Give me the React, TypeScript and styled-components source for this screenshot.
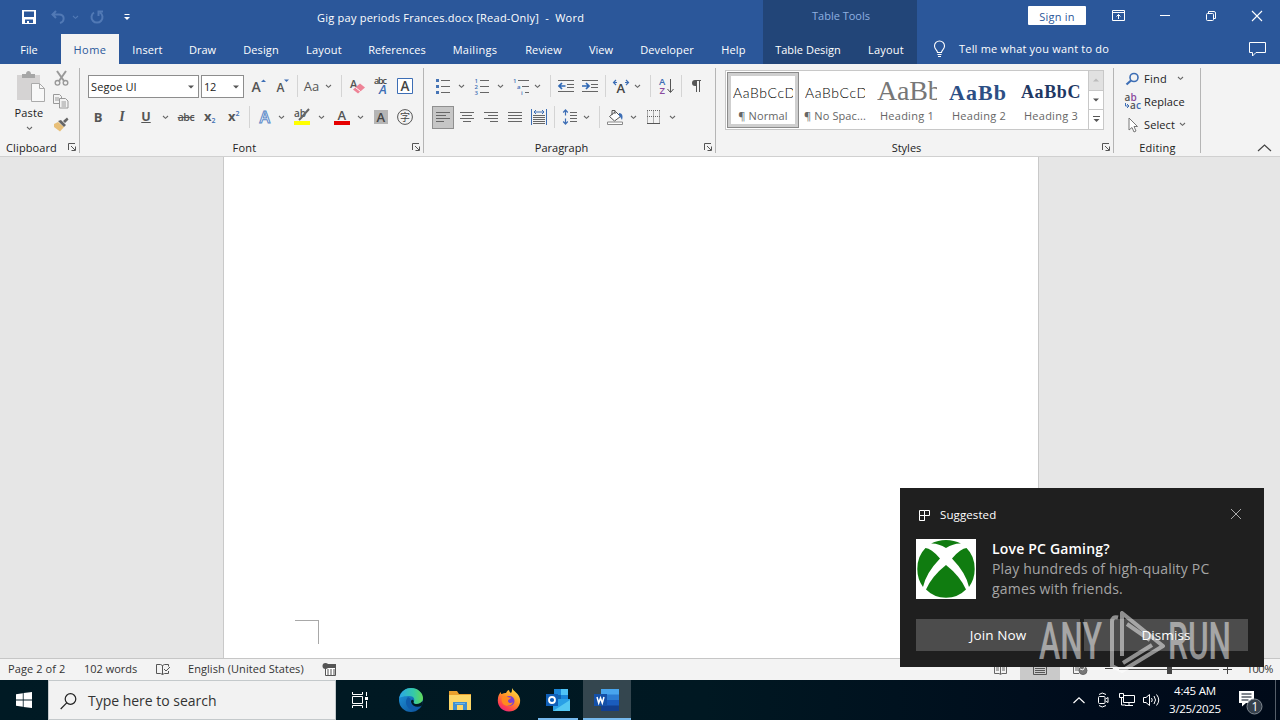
import React from 'react';
import styled, { createGlobalStyle } from 'styled-components';

const Global = createGlobalStyle`
  * { box-sizing: border-box; }
  body { margin: 0; overflow: hidden; font-family: "Open Sans", "Noto Sans", sans-serif; font-size: 11px; color: #262626; }
  svg { display: block; flex: none; overflow: visible; }
`;

const Screen = styled.div`
  position: relative; width: 1280px; height: 720px; display: flex; flex-direction: column; overflow: hidden; background: #e6e6e6;
`;
const Label = styled.span<{ $ls?: number; $size?: number; $color?: string; $gap?: number }>`
  white-space: pre; line-height: 16px; letter-spacing: ${p => p.$ls ?? 0}px; margin-left: ${p => p.$gap ?? 0}px;
  font-size: ${p => p.$size ?? 11}px; color: ${p => p.$color ?? 'inherit'};
`;
const Cell = styled.div<{ $w?: number; $gap?: number }>`
  width: ${p => p.$w ?? 24}px; margin-left: ${p => p.$gap ?? 0}px; height: 24px; flex: none;
  display: flex; align-items: center; justify-content: center;
`;

/* Title bar and tabs */
const Header = styled.header`height: 64px; flex: none; display: flex; background: #2b579a; color: #fff;`;
const HeaderMain = styled.div`width: 763px; display: flex; flex-direction: column;`;
const TitleRow = styled.div`height: 34px; display: flex; align-items: center; padding-left: 17px;`;
const TitleText = styled.div`margin-left: 178px; padding-top: 2px;`;
const TabRow = styled.nav`height: 30px; display: flex;`;
const Tab = styled.div<{ $w: number; $gap?: number; $active?: boolean }>`
  width: ${p => p.$w}px; margin-left: ${p => p.$gap ?? 0}px; height: 30px; flex: none; display: flex; align-items: center; justify-content: center; padding-top: 2px;
  background: ${p => (p.$active ? '#f3f3f3' : 'transparent')}; color: ${p => (p.$active ? '#2b579a' : '#fff')};
`;
const TableTools = styled.div`width: 154px; background: #224578; display: flex; flex-direction: column;`;
const ToolsTitle = styled.div`height: 32px; display: flex; align-items: center; justify-content: center; color: #8fb0e0; padding-left: 2px; margin-bottom: 2px;`;
const HeaderEnd = styled.div`flex: 1; display: flex; flex-direction: column;`;
const WindowRow = styled.div`height: 34px; display: flex; align-items: center; padding-left: 111px; padding-bottom: 3px;`;
const SignIn = styled.button`
  width: 58px; height: 19px; border: 0; border-radius: 1px; background: #fff; padding: 2px 0 0; display: flex; align-items: center; justify-content: center; color: #2b579a; font-family: inherit;
`;
const TellRow = styled.div`height: 30px; display: flex; align-items: center; padding-left: 14px; gap: 11px;`;
const CommentSlot = styled.div`margin-left: auto; padding-right: 14px;`;

/* Ribbon */
const Ribbon = styled.section`height: 93px; flex: none; display: flex; background: #f3f3f3; border-bottom: 1px solid #d0d0d0; padding-top: 4px;`;
const Group = styled.div<{ $w: number }>`
  width: ${p => p.$w}px; height: 85px; flex: none; border-right: 1px solid #b5b5b5; display: flex; flex-direction: column;
`;
const GroupBody = styled.div`height: 70px; flex: none;`;
const GroupFoot = styled.div<{ $pull?: number }>`
  height: 15px; display: flex; align-items: center; color: #222; padding: 0 2px 0 12px;
  & > span { flex: 1; text-align: center; margin-left: -${p => p.$pull ?? 0}px; padding-top: 5px; line-height: 12px; }
  & > svg { margin-top: 4px; }
`;
const ToolRow = styled.div<{ $pad: number; $top: number }>`
  display: flex; align-items: center; height: 24px; padding-left: ${p => p.$pad}px; margin-top: ${p => p.$top}px; color: #555;
`;
const Divider = styled.i<{ $l: number; $r: number }>`width: 1px; height: 22px; flex: none; margin: 0 ${p => p.$r}px 0 ${p => p.$l}px; background: #d4d4d4;`;
const Combo = styled.div<{ $w: number; $gap: number }>`
  width: ${p => p.$w}px; height: 23px; margin-left: ${p => p.$gap}px; flex: none; border: 1px solid #8d8d8d; background: #fff; color: #222;
  display: flex; align-items: center; justify-content: space-between; padding: 1px 4px 0 2px;
`;
const Pressed = styled.div`width: 22px; height: 23px; background: #c6c6c6; border: 1px solid #8f8f8f; display: flex; align-items: center; justify-content: center;`;
const Glyph = styled.span<{ $size: number; $weight?: number; $color?: string; $style?: string; $deco?: string; $ls?: number; $serif?: boolean }>`
  font-size: ${p => p.$size}px; font-weight: ${p => p.$weight ?? 400}; color: ${p => p.$color ?? '#555'}; font-style: ${p => p.$style ?? 'normal'};
  text-decoration: ${p => p.$deco ?? 'none'}; letter-spacing: ${p => p.$ls ?? 0}px; line-height: 1; font-family: ${p => (p.$serif ? '"Liberation Serif", serif' : 'inherit')};
`;
const ClipBody = styled.div`display: flex; height: 70px; padding: 3px 0 0 14px;`;
const PasteCol = styled.div`width: 30px; display: flex; flex-direction: column; align-items: center; color: #222; & > span { margin-top: 2px; } & > svg:last-child { margin-top: 5px; }`;
const ClipCol = styled.div`width: 24px; margin-left: 5px; display: flex; flex-direction: column; align-items: center; gap: 8px;`;

const Gallery = styled.div`display: flex; height: 60px; width: 379px; margin: 2px 0 0 9px; border: 1px solid #c8c8c8; background: #fff;`;
const StyleItem = styled.div<{ $active?: boolean }>`
  width: 72px; height: 56px; margin: 1px 0 0 ${p => (p.$active ? 1 : 0)}px; display: flex; flex-direction: column; align-items: center; flex: none; color: #666;
  outline: ${p => (p.$active ? '1px solid #8b8b8b' : 'none')}; outline-offset: -1px; border: 4px solid ${p => (p.$active ? '#cfcfcf' : 'transparent')};
  & > span { margin-top: 3px; }
`;
const Sample = styled.div<{ $size: number; $font: string; $color: string; $weight?: number; $ls?: number; $up?: number }>`
  width: 60px; height: 31px; overflow: hidden; white-space: nowrap; font: ${p => p.$weight ?? 400} ${p => p.$size}px/33px ${p => p.$font};
  color: ${p => p.$color}; letter-spacing: ${p => p.$ls ?? 0}px; margin-top: ${p => -(p.$up ?? 0)}px; margin-bottom: ${p => p.$up ?? 0}px;
`;
const Scrollers = styled.div`width: 15px; margin-left: auto; display: flex; flex-direction: column; border-left: 1px solid #c8c8c8;`;
const ScrollBtn = styled.div<{ $off?: boolean }>`flex: 1; display: flex; align-items: center; justify-content: center; background: ${p => (p.$off ? '#e1e1e1' : '#fff')}; & + & { border-top: 1px solid #c8c8c8; }`;
const EditRow = styled.div<{ $chev?: number }>`
  height: 23px; display: flex; align-items: center; padding-left: 10px; gap: 3px; color: #222; margin-top: -1px; margin-bottom: 1px;
  & > span + svg { margin-left: ${p => p.$chev ?? 0}px; }
`;
const CollapseSlot = styled.div`margin-left: auto; align-self: flex-end; padding: 0 8px 4px 0;`;

/* Document */
const Workspace = styled.main`flex: 1; display: flex; justify-content: center; padding-right: 18px;`;
const Paper = styled.div`width: 816px; background: #fff; border: solid #c9c9c9; border-width: 0 1px; display: flex; align-items: flex-end; padding: 0 0 14px 71px;`;
const CropMark = styled.div`width: 24px; height: 24px; border: solid #a8a8a8; border-width: 1px 1px 0 0;`;

/* Status bar */
const StatusBar = styled.footer`height: 22px; flex: none; display: flex; align-items: center; background: #f3f3f3; border-top: 1px solid #c6c6c6; padding: 0 7px 1px 8px; color: #333;`;
const StatusItem = styled.div<{ $w: number }>`width: ${p => p.$w}px; flex: none; display: flex; align-items: center;`;
const ViewButton = styled.div<{ $on?: boolean }>`width: 40px; height: 21px; display: flex; align-items: center; justify-content: center; background: ${p => (p.$on ? '#c9c9c9' : 'transparent')};`;
const Views = styled.div`margin-left: auto; display: flex; align-items: center;`;
const ZoomOut = styled.div`margin-left: 5px;`;
const Track = styled.div`width: 100px; height: 10px; margin: 0 4px; display: flex; align-items: center; justify-content: center; background: linear-gradient(#555, #555) center / 100% 1px no-repeat;`;
const Thumb = styled.i`width: 5px; height: 10px; background: #444;`;

/* Taskbar */
const Taskbar = styled.footer`height: 40px; flex: none; display: flex; background: linear-gradient(90deg, #001a24, #001822 55%, #000c1c 85%, #000a19); color: #fff;`;
const TaskButton = styled.div<{ $w?: number; $on?: boolean; $line?: boolean; $gap?: number }>`
  width: ${p => p.$w ?? 48}px; margin-left: ${p => p.$gap ?? 0}px; height: 40px; flex: none; display: flex; align-items: center; justify-content: center;
  background: ${p => (p.$on ? '#34464f' : 'transparent')}; box-shadow: ${p => (p.$line ? 'inset 0 -2px #76b9ed' : 'none')};
`;
const SearchBox = styled.div`width: 288px; height: 40px; background: #f2f2f2; border: 1px solid #c4c9cb; display: flex; align-items: center; padding: 2px 0 0 11px; gap: 11px; color: #333;`;
const Tray = styled.div`margin-left: auto; display: flex; align-items: center;`;
const Clock = styled.div`width: 62px; margin-left: 1px; display: flex; flex-direction: column; align-items: center; & > span { line-height: 18px; }`;
const ShowDesktop = styled.i`width: 1px; height: 40px; background: #555e69; margin-left: 9px; margin-right: 4px;`;

/* Notification */
const Toast = styled.aside`position: absolute; left: 900px; top: 488px; width: 364px; height: 179px; background: #1f1f1f; color: #fff; padding: 16px; display: flex; flex-direction: column;`;
const ToastHead = styled.div`height: 21px; display: flex; align-items: center; gap: 9px; padding: 0 7px 0 3px; & > svg:last-child { margin-left: auto; margin-bottom: 2px; }`;
const ToastBody = styled.div`display: flex; margin-top: 14px; gap: 16px;`;
const ToastText = styled.div`display: flex; flex-direction: column; color: #a5a5a5; font-size: 14px; line-height: 20px; white-space: nowrap; letter-spacing: 0.18px;`;
const ToastTitle = styled.strong`font-weight: 600; color: #fff; letter-spacing: 0.18px;`;
const ToastActions = styled.div`display: grid; grid-template-columns: 1fr 1fr; gap: 4px; margin-top: 20px;`;
const ToastButton = styled.div`height: 32px; background: #4c4c4c; display: flex; align-items: center; justify-content: center; font-size: 13.5px; letter-spacing: 0.1px;`;
const Watermark = styled.svg`position: absolute; left: 1036px; top: 608px;`;

const Chevron = ({ c = '#666' }: { c?: string }) => (
  <svg width="7" height="5" viewBox="0 0 7 5"><path d="M1 1l2.500 2.300L6 1" fill="none" stroke={c} strokeWidth="1.100" /></svg>
);
const Caret = ({ c = '#555' }: { c?: string }) => <svg width="6" height="4" viewBox="0 0 6 4"><path d="M0 .5h6L3 3.500z" fill={c} /></svg>;
const Launcher = () => (
  <svg width="9" height="9" viewBox="0 0 9 9"><path d="M.5 7V.5H7M3 3l4 4M7.500 3.500v4H3.500" fill="none" stroke="#555" /></svg>
);
const Lines = ({ rows }: { rows: [number, number][] }) => (
  <svg width="16" height="14" viewBox="0 0 16 14"><path d={rows.map(([a, b], i) => `M${a} ${2.5 + i * 3}H${b}`).join('')} stroke="#666" /></svg>
);
const A = ({ x, y, s, c }: { x: number; y: number; s: number; c: string }) => (
  <text x={x} y={y} fontSize={s} fill={c} fontWeight={600}>A</text>
);

const tabs: [string, number, number][] = [
  ['Insert', 57, 0.1], ['Draw', 53, 0], ['Design', 64, 0.1], ['Layout', 62, 0.2], ['References', 84, 0.05], ['Mailings', 72, 0.3],
  ['Review', 65, 0.1], ['View', 50, 0], ['Developer', 82, 0.1], ['Help', 51, 0.2],
];

const ClipboardGroup = () => (
  <Group $w={80}>
    <ClipBody>
      <PasteCol>
        <svg width="30" height="32" viewBox="0 0 30 32">
          <path d="M3 4h23v25H3z" fill="#d5d3d3" /><path d="M8 3h4c0-4 5-4 5 0h4v4H8z" fill="#a6a6a6" />
          <path d="M17.500 12.500h8l5 5v13h-13z" fill="#f8f8f8" stroke="#aaa" /><path d="M25.500 12.500v5h5" fill="none" stroke="#aaa" />
        </svg>
        <Label $ls={0.15}>Paste</Label>
        <Chevron />
      </PasteCol>
      <ClipCol>
        <svg width="15" height="15" viewBox="0 0 15 15" fill="none" stroke="#999" strokeWidth="1.400"><path d="M3 0l7 10M12 0L5 10" strokeWidth="2" /><circle cx="3.500" cy="11.800" r="2.300" /><circle cx="11.500" cy="11.800" r="2.300" /></svg>
        <svg width="16" height="15" viewBox="0 0 16 15" fill="#f3f3f3" stroke="#999"><path d="M.5.500h6l2 2v7h-8zM2 4h4M2 6h4" /><path d="M6.500 4.500h6l2.500 2.500v7H6.500zM8.500 8h4.500M8.500 10h4.500M8.500 12h4.500" /></svg>
        <svg width="16" height="15" viewBox="0 0 16 15"><path d="M1 7l4-2 6 5-4 4.500L1 10z" fill="#e8bf78" /><path d="M5 4l3-1 5 5-2 2zM10 4l4-3.500 1.500 2L12 6z" fill="#666" /></svg>
      </ClipCol>
    </ClipBody>
    <GroupFoot $pull={17}><Label $ls={0.1}>Clipboard</Label><Launcher /></GroupFoot>
  </Group>
);

const FontGroup = () => (
  <Group $w={344}>
    <GroupBody>
      <ToolRow $pad={8} $top={6}>
        <Combo $w={111} $gap={0}><Label $ls={0.1}>Segoe UI</Label><Caret /></Combo>
        <Combo $w={43} $gap={2}><Label $ls={-0.2}>12</Label><Caret /></Combo>
        <Cell $gap={2}><svg width="16" height="16" viewBox="0 0 16 16"><A x={1.5} y={14} s={14} c="#555" /><path d="M11 4h5L13.500 1.500z" fill="#3d6eb5" /></svg></Cell>
        <Cell><svg width="16" height="16" viewBox="0 0 16 16"><A x={2.5} y={14} s={12} c="#555" /><path d="M10 1.500h5L12.500 4z" fill="#3d6eb5" /></svg></Cell>
        <Divider $l={3} $r={2} />
        <Cell $w={23}><Glyph $size={13} $weight={500}>Aa</Glyph></Cell>
        <Cell $w={10}><Chevron /></Cell>
        <Divider $l={8} $r={3} />
        <Cell><svg width="16" height="16" viewBox="0 0 16 16"><A x={1} y={10} s={11} c="#555" /><path d="M4 11.500l7-6 5 4-7 6z" fill="#ee8396" /><path d="M6.500 9.500l5 4" stroke="#fff" /></svg></Cell>
        <Cell><svg width="16" height="18" viewBox="0 0 16 18"><text x="1" y="7" fontSize="9" fill="#444" fontWeight="600" textLength="13">abc</text><g fontStyle="italic"><A x={6} y={17} s={13} c="#3d6eb5" /></g></svg></Cell>
        <Cell><svg width="16" height="16" viewBox="0 0 16 16"><path d="M.5.500h15v15H.5z" fill="#fff" stroke="#3d6eb5" /><A x={3.5} y={13} s={13.5} c="#444" /></svg></Cell>
      </ToolRow>
      <ToolRow $pad={6} $top={7}>
        <Cell><Glyph $size={13} $weight={700}>B</Glyph></Cell>
        <Cell><Glyph $size={14} $weight={700} $style="italic" $serif>I</Glyph></Cell>
        <Cell><Glyph $size={12.5} $weight={700} $deco="underline">U</Glyph></Cell>
        <Cell $w={14}><Chevron /></Cell>
        <Cell $gap={2}><Glyph $size={10.5} $weight={600} $deco="line-through" $ls={-0.4}>abc</Glyph></Cell>
        <Cell><svg width="14" height="16" viewBox="0 0 14 16"><text x="1" y="12" fontSize="13" fontWeight="700" fill="#555">x</text><text x="8.500" y="14" fontSize="7" fontWeight="600" fill="#3d6eb5">2</text></svg></Cell>
        <Cell><svg width="14" height="16" viewBox="0 0 14 16"><text x="1" y="12" fontSize="13" fontWeight="700" fill="#555">x</text><text x="8.500" y="6.500" fontSize="7" fontWeight="600" fill="#3d6eb5">2</text></svg></Cell>
        <Divider $l={3} $r={3} />
        <Cell><svg width="16" height="16" viewBox="0 0 16 16"><text x="2.500" y="14" fontSize="16" fontWeight="600" fill="#fff" stroke="#5a88c8" strokeWidth="1">A</text></svg></Cell>
        <Cell $w={8}><Chevron /></Cell>
        <Cell $gap={5}><svg width="18" height="16" viewBox="0 0 18 16"><text x="1" y="8" fontSize="10" fontWeight="600" fill="#555">ab</text><path d="M16 0l-8 9-2 2" stroke="#666" strokeWidth="2" fill="none" /><path d="M1 12h16v4H1z" fill="#ffff00" /></svg></Cell>
        <Cell $w={12} $gap={1}><Chevron /></Cell>
        <Cell $gap={3}><svg width="16" height="16" viewBox="0 0 16 16"><A x={3.5} y={11} s={13} c="#555" /><path d="M0 12h16v4H0z" fill="#e60000" /></svg></Cell>
        <Cell $w={12}><Chevron /></Cell>
        <Cell $gap={3}><svg width="14" height="14" viewBox="0 0 14 14"><path d="M0 0h14v14H0z" fill="#b5b5b5" /><A x={2.5} y={12} s={13} c="#444" /></svg></Cell>
        <Cell><svg width="16" height="16" viewBox="0 0 16 16"><circle cx="8" cy="8" r="7.400" fill="none" stroke="#555" /><text x="3" y="11.600" fontSize="10" fill="#444" fontFamily="Noto Sans CJK SC, sans-serif">字</text></svg></Cell>
      </ToolRow>
    </GroupBody>
    <GroupFoot $pull={15}><Label $ls={0.2}>Font</Label><Launcher /></GroupFoot>
  </Group>
);

const ParagraphGroup = () => (
  <Group $w={292}>
    <GroupBody>
      <ToolRow $pad={7} $top={6}>
        <Cell $w={23}><svg width="14" height="15" viewBox="0 0 14 15"><path d="M0 0h3v3H0zM0 6h3v3H0zM0 12h3v3H0z" fill="#4674b5" /><path d="M5 1.500h9M5 7.500h9M5 13.500h9" stroke="#666" /></svg></Cell>
        <Cell $w={12} $gap={1}><Chevron /></Cell>
        <Cell $gap={3}><svg width="16" height="16" viewBox="0 0 16 16" fontSize="6" fontWeight="600" fill="#3d6eb5"><text x="0.500" y="4.500">1</text><text x="0.500" y="10.500">2</text><text x="0.500" y="16.500">3</text><path d="M6 2.500h9M6 8.500h9M6 14.500h9" stroke="#666" /></svg></Cell>
        <Cell $w={12}><Chevron /></Cell>
        <Cell $gap={3}><svg width="18" height="16" viewBox="0 0 18 16" fontSize="6" fontWeight="600" fill="#3d6eb5"><text x="1" y="4.500">1</text><text x="5" y="10.500">a</text><text x="9" y="16.500">i</text><path d="M6 2.500h11M10 8.500h7M13 14.500h4" stroke="#666" /></svg></Cell>
        <Cell $w={8}><Chevron /></Cell>
        <Divider $l={9} $r={3} />
        <Cell><svg width="16" height="12" viewBox="0 0 16 12"><path d="M0 .5h16M9 4.500h7M9 7.500h7M0 11.500h16" stroke="#666" /><path d="M7.500 6H1.500M4 3L1 6l3 3" fill="none" stroke="#2f68b5" strokeWidth="1.700" /></svg></Cell>
        <Cell><svg width="16" height="12" viewBox="0 0 16 12"><path d="M0 .5h16M9 4.500h7M9 7.500h7M0 11.500h16" stroke="#666" /><path d="M0 6h6M4 3l3 3-3 3" fill="none" stroke="#2f68b5" strokeWidth="1.700" /></svg></Cell>
        <Divider $l={3} $r={3} />
        <Cell><svg width="16" height="14" viewBox="0 0 16 14"><A x={3.5} y={14} s={13} c="#444" /><path d="M0 3.500h4M3 1L.5 3.500 3 6M12 3.500h4M13 1l2.500 2.500L13 6" fill="none" stroke="#3d6eb5" strokeWidth="1.200" /></svg></Cell>
        <Cell $w={8}><Chevron /></Cell>
        <Divider $l={9} $r={3} />
        <Cell><svg width="15" height="16" viewBox="0 0 15 16" fontSize="9.500" fontWeight="600"><text x="0" y="7" fill="#3d6eb5">A</text><text x="0.500" y="16" fill="#8a4a9e">Z</text><path d="M11.500 1v13M8.500 11l3 3.500 3-3.500" stroke="#555" fill="none" /></svg></Cell>
        <Divider $l={3} $r={2} />
        <Cell><svg width="10" height="12" viewBox="0 0 10 12"><path d="M10 .5H4M5.500 0v12M8.500 0v12" stroke="#555" fill="none" /><path d="M5.500 0H4a3 3 0 000 6h1.500z" fill="#555" /></svg></Cell>
      </ToolRow>
      <ToolRow $pad={8} $top={7}>
        <Pressed><Lines rows={[[1, 15], [1, 11], [1, 15], [1, 9]]} /></Pressed>
        <Cell $gap={1}><Lines rows={[[1, 15], [3, 13], [1, 15], [4, 12]]} /></Cell>
        <Cell><Lines rows={[[1, 15], [5, 15], [1, 15], [7, 15]]} /></Cell>
        <Cell><Lines rows={[[1, 15], [1, 15], [1, 15], [1, 15]]} /></Cell>
        <Cell><svg width="16" height="16" viewBox="0 0 16 16"><path d="M.5 0v16M15.500 0v16M3 3h10M5 1L3 3l2 2M11 1l2 2-2 2" stroke="#3d6eb5" fill="none" /><path d="M2 6.500h12M2 8.500h12M2 10.500h12M2 12.500h12M2 14.500h12" stroke="#666" /></svg></Cell>
        <Divider $l={3} $r={3} />
        <Cell><svg width="14" height="16" viewBox="0 0 14 16"><path d="M2.500 1v5.500M2.500 9.500V15M.2 3.500L2.500 1l2.300 2.500M.2 12.500L2.500 15l2.300-2.500" fill="none" stroke="#3d6eb5" strokeWidth="1.200" /><path d="M7 3.500h7M7 6.500h7M7 9.500h7M7 12.500h7" stroke="#666" /></svg></Cell>
        <Cell $w={8}><Chevron /></Cell>
        <Divider $l={9} $r={3} />
        <Cell><svg width="17" height="16" viewBox="0 0 17 16"><path d="M2.500 7.500l6-5 5 5-6 4.500z" fill="#fff" stroke="#555" /><path d="M5 6V1.500h3V5" fill="none" stroke="#555" /><path d="M12 4c4 0 4 4 3 7-1-1-1-3-3-4z" fill="#3d6eb5" /><path d="M.5 13h15v2.500H.5z" fill="#fff" stroke="#888" /></svg></Cell>
        <Cell $w={12}><Chevron /></Cell>
        <Cell $gap={2}><svg width="13" height="14" viewBox="0 0 13 14"><path d="M.5.500v13M6.500.500v13M12.500.500v13M0 .5h13M0 6.500h13" stroke="#666" strokeDasharray="1 1" /><path d="M0 13.500h13" stroke="#555" /></svg></Cell>
        <Cell $w={12} $gap={1}><Chevron /></Cell>
      </ToolRow>
    </GroupBody>
    <GroupFoot $pull={17}><Label>Paragraph</Label><Launcher /></GroupFoot>
  </Group>
);

const StylesGroup = () => (
  <Group $w={398}>
    <GroupBody>
      <Gallery>
        <StyleItem $active><Sample $size={14} $font="Lato, sans-serif" $color="#000" $ls={0.6} $weight={300}>AaBbCcDd</Sample><Label $ls={0.1}>¶ Normal</Label></StyleItem>
        <StyleItem><Sample $size={14} $font="Lato, sans-serif" $color="#000" $ls={0.6} $weight={300}>AaBbCcDd</Sample><Label $ls={0.1}>¶ No Spac...</Label></StyleItem>
        <StyleItem><Sample $size={28} $font="Liberation Serif, serif" $color="#777" $ls={-0.2} $up={2}>AaBbC</Sample><Label $ls={0.25}>Heading 1</Label></StyleItem>
        <StyleItem><Sample $size={22} $font="Liberation Serif, serif" $color="#2c4f85" $weight={700} $ls={1.1}>AaBb</Sample><Label $ls={0.25}>Heading 2</Label></StyleItem>
        <StyleItem><Sample $size={18} $font="Liberation Serif, serif" $color="#1f3864" $weight={700} $ls={0.6}>AaBbC</Sample><Label $ls={0.25}>Heading 3</Label></StyleItem>
        <Scrollers>
          <ScrollBtn $off><svg width="6" height="4"><path d="M0 3.500h6L3 .5z" fill="#bbb" /></svg></ScrollBtn>
          <ScrollBtn><Caret /></ScrollBtn>
          <ScrollBtn><svg width="7" height="7"><path d="M0 .5h7" stroke="#555" /><path d="M.5 3h6L3.500 6z" fill="#555" /></svg></ScrollBtn>
        </Scrollers>
      </Gallery>
    </GroupBody>
    <GroupFoot $pull={17}><Label>Styles</Label><Launcher /></GroupFoot>
  </Group>
);

const EditingGroup = () => (
  <Group $w={87}>
    <GroupBody>
      <EditRow $chev={7}><svg width="17" height="14" viewBox="0 0 17 14" fill="none" stroke="#3d6eb5"><circle cx="10" cy="5.500" r="4" strokeWidth="1.600" /><path d="M7 8.500l-4.500 4" strokeWidth="2.200" /></svg><Label $ls={0.3}>Find</Label><Chevron /></EditRow>
      <EditRow><svg width="17" height="16" viewBox="0 0 17 16" fontSize="10" fontWeight="600"><text x="0.500" y="7" fill="#555">a</text><text x="6.500" y="7" fill="#8a4a9e">b</text><text x="6" y="15" fill="#555">a</text><text x="12" y="15" fill="#3d6eb5">c</text><path d="M1.500 9v3h3M3 10l2 2-2 2" fill="none" stroke="#3d6eb5" /></svg><Label $ls={0.1}>Replace</Label></EditRow>
      <EditRow $chev={1}><svg width="17" height="16" viewBox="0 0 17 16"><path d="M5 1v12l3-2.500 2 4.500 2-1-2-4.500h3.500z" fill="#fff" stroke="#777" /></svg><Label $ls={0.1}>Select</Label><Chevron /></EditRow>
    </GroupBody>
    <GroupFoot $pull={9}><Label $ls={0.2}>Editing</Label></GroupFoot>
  </Group>
);

const Edge = () => (
  <svg width="26" height="26" viewBox="0 0 26 26">
    <defs>
      <linearGradient id="edgeTop" x1="0" x2="1"><stop offset="0" stopColor="#2aa6e8" /><stop offset=".6" stopColor="#35c9a8" /><stop offset="1" stopColor="#62d957" /></linearGradient>
      <linearGradient id="edgeLow" x1="0" x2="1" y2="1"><stop offset="0" stopColor="#1f9be0" /><stop offset="1" stopColor="#0c4a94" /></linearGradient>
    </defs>
    <circle cx="13" cy="13" r="12" fill="url(#edgeLow)" />
    <path d="M1.200 11C3 4 8 1 13 1c7 0 12 5 12 10 0 4-3 6-6.500 6-3 0-3.500-1.500-2.500-3 1-2-.5-5-4.500-5C7 9 2 10 1.200 11z" fill="url(#edgeTop)" />
    <path d="M10 10c-4 4-2 11 4 13 4 1 7-1 9.500-4-5 2-10 0-11-4-.4-2 .5-3 .5-3z" fill="#0f5cab" />
    <path d="M16 14c-1 1.500-.5 3 2.500 3 3 0 5-1.500 6-3l.3 2-1.300 3c-5 2-9.500 0-10.500-4 0-2 1-3.500 3-1z" fill="#001a24" />
  </svg>
);
const Firefox = () => (
  <svg width="24" height="24" viewBox="0 0 24 24">
    <defs><linearGradient id="fox" x1=".8" y1="0" x2=".2" y2="1"><stop offset="0" stopColor="#ffe14a" /><stop offset=".45" stopColor="#ff9425" /><stop offset=".8" stopColor="#ff3f50" /><stop offset="1" stopColor="#e3218c" /></linearGradient></defs>
    <path d="M15 0c1 3 7 5 8 11 1 7-4 12.500-11 12.500S.5 18 .8 12C1 8 2 6 4 4c0 2 0 2 1 2 1-1 3-1 4-1 1-2 2-3 3-3 0 2 2 3 2 3 1-1 1-3 1-5z" fill="url(#fox)" />
    <circle cx="12.500" cy="13" r="5" fill="#7b3fd4" /><path d="M5 9c2-1 4-1 6 0 1 1 3 0 3 1s-3 1-3 3 3 3 5 1c-1 4-7 5-10 2-1-2-2-4-1-7z" fill="#ff8a1f" />
  </svg>
);
const Folder = () => (
  <svg width="22" height="19" viewBox="0 0 22 19"><path d="M0 0h8l2 3h12v16H0z" fill="#e9a02c" /><path d="M0 4h22v15H0z" fill="#fcd667" /><path d="M4 11h14v8H4z" fill="#3f8fd0" /><path d="M8 14h6v5H8z" fill="#fcd667" /><path d="M6 12h10v1H6z" fill="#6db7e8" /></svg>
);
const Outlook = () => (
  <svg width="24" height="22" viewBox="0 0 24 22"><path d="M8 0h14v12H8z" fill="#1a86d9" /><path d="M15 0h7v6h-7z" fill="#4fc3f5" /><path d="M8 6h7v6H8z" fill="#0f63ae" /><path d="M7 10l17 0v12H7z" fill="#2aa0e6" /><path d="M7 22l17-11v11z" fill="#55c8f2" /><path d="M0 5h12v12H0z" fill="#0f5fb8" /><circle cx="6" cy="11" r="3" fill="none" stroke="#fff" strokeWidth="1.800" /></svg>
);
const WordLogo = () => (
  <svg width="26" height="22" viewBox="0 0 26 22"><path d="M7 0h18v6H7z" fill="#48a5ee" /><path d="M7 5.500h18V11H7z" fill="#2b7cd3" /><path d="M7 11h18v6H7z" fill="#1a5cbe" /><path d="M7 16.500h18V22H7z" fill="#123f8f" /><path d="M0 5h13v12H0z" fill="#1450a8" /><path d="M3 8l1.700 6L6.500 9l1.800 5L10 8" fill="none" stroke="#fff" strokeWidth="1.500" /></svg>
);
const XboxLogo = () => (
  <svg width="60" height="60" viewBox="0 0 60 60">
    <path d="M0 0h60v60H0z" fill="#fff" />
    <g fill="#107c10">
      <path d="M15 4.500Q22 1 30 1T45 4.500Q38 4 30 9 22 4 15 4.500z" />
      <path d="M9.500 9Q15 9 24 19.500 10 34 7 48 1.300 40 1.300 30 1.300 17 9.500 9z" />
      <path d="M50.500 9Q45 9 36 19.500 50 34 53 48 58.700 40 58.700 30 58.700 17 50.500 9z" />
      <path d="M30 26Q44 37 50 50.500 42 58.700 30 58.700T10 50.500Q16 37 30 26z" />
    </g>
  </svg>
);

export default function App() {
  return (
    <Screen>
      <Global />
      <Header>
        <HeaderMain>
          <TitleRow>
            <Cell><svg width="14" height="14" viewBox="0 0 14 14"><path d="M0 0h14v14H0z" fill="#fff" /><path d="M2 1.500h10v5.500H2zM3 9.500h8V13H3z" fill="#2b579a" /><path d="M5 11h2v2H5z" fill="#fff" /></svg></Cell>
            <Cell $gap={5}><svg width="14" height="14" viewBox="0 0 14 14" fill="none" stroke="#5179b5" strokeWidth="2"><path d="M5 1L1.500 4.500 5 8M2 4.500h6c6 0 6 7 1 8.500" /></svg></Cell>
            <Cell $w={10}><Chevron c="#5179b5" /></Cell>
            <Cell $gap={5}><svg width="14" height="14" viewBox="0 0 14 14" fill="none" stroke="#5179b5" strokeWidth="2"><path d="M4 2.500a5.500 5.500 0 106 0M8.500 6V1.500H13" /></svg></Cell>
            <Cell $gap={6}><svg width="7" height="8" viewBox="0 0 7 8"><path d="M.5 1.500h5" stroke="#fff" /><path d="M0 4h6L3 7z" fill="#fff" /></svg></Cell>
            <TitleText><Label $ls={0.24}>Gig pay periods Frances.docx [Read-Only]  -  Word</Label></TitleText>
          </TitleRow>
          <TabRow>
            <Tab $w={58}><Label>File</Label></Tab>
            <Tab $w={58} $gap={3} $active><Label $ls={0.5}>Home</Label></Tab>
            {tabs.map(([t, w, ls]) => <Tab key={t} $w={w}><Label $ls={ls}>{t}</Label></Tab>)}
          </TabRow>
        </HeaderMain>
        <TableTools>
          <ToolsTitle><Label>Table Tools</Label></ToolsTitle>
          <TabRow><Tab $w={90}><Label>Table Design</Label></Tab><Tab $w={64} $gap={1}><Label $ls={0.2}>Layout</Label></Tab></TabRow>
        </TableTools>
        <HeaderEnd>
          <WindowRow>
            <SignIn><Label $ls={0.2}>Sign in</Label></SignIn>
            <Cell $gap={20}><svg width="13" height="11" viewBox="0 0 13 11" fill="none" stroke="#fff"><path d="M.5.500h12v10H.5zM.5 2.500h12M6.500 9V4.500M4.500 6.500l2-2 2 2" /></svg></Cell>
            <Cell $gap={23}><svg width="10" height="2"><path d="M0 .5h10" stroke="#fff" /></svg></Cell>
            <Cell $gap={22}><svg width="10" height="10" viewBox="0 0 10 10" fill="none" stroke="#fff"><rect x=".5" y="2.500" width="7" height="7" rx="1" /><path d="M2.500 2V.5h5.500q1.500 0 1.500 1.500v5.500H8" /></svg></Cell>
            <Cell $gap={22}><svg width="10" height="10"><path d="M0 0l10 10M10 0L0 10" stroke="#fff" strokeWidth="1.100" /></svg></Cell>
          </WindowRow>
          <TellRow>
            <svg width="17" height="16" viewBox="0 0 17 16" fill="none" stroke="#fff" strokeWidth="1.100"><path d="M6.500 11.500C6.500 9 3.500 8.500 3.500 5a5 5 0 0110 0c0 3.500-3 4-3 6.500zM6.500 13.500h4M7 15.500h3" /></svg>
            <Label $ls={0.2}>Tell me what you want to do</Label>
            <CommentSlot><svg width="17" height="15" viewBox="0 0 17 15"><path d="M.5.500h16v10H7l-3.500 3.500v-3.500h-3z" fill="none" stroke="#fff" /></svg></CommentSlot>
          </TellRow>
        </HeaderEnd>
      </Header>

      <Ribbon>
        <ClipboardGroup /><FontGroup /><ParagraphGroup /><StylesGroup /><EditingGroup />
        <CollapseSlot><svg width="15" height="9" viewBox="0 0 15 9"><path d="M1 8l6.500-6L14 8" fill="none" stroke="#444" strokeWidth="1.200" /></svg></CollapseSlot>
      </Ribbon>

      <Workspace><Paper><CropMark /></Paper></Workspace>

      <StatusBar>
        <StatusItem $w={76}><Label $ls={0.1}>Page 2 of 2</Label></StatusItem>
        <StatusItem $w={72}><Label>102 words</Label></StatusItem>
        <StatusItem $w={32}><svg width="14" height="13" viewBox="0 0 14 13" fill="none" stroke="#555"><path d="M.5 1.500h4l2 1v9l-2-1h-4zM6.500 2.500l2-1h4v2M6.500 11.500l2-1h4V8M8 6l2 2 4-4" /></svg></StatusItem>
        <StatusItem $w={135}><Label $ls={0.06}>English (United States)</Label></StatusItem>
        <svg width="14" height="13" viewBox="0 0 14 13"><path d="M2.500 3.500h10v9h-10z" fill="#fff" stroke="#555" /><path d="M4 1h9v4H4z" fill="#555" /><path d="M4 7h8M4 9h8M4 11h8" stroke="#555" strokeDasharray="2 1" /><circle cx="2.500" cy="3" r="3" fill="#555" /></svg>
        <Views>
          <ViewButton><svg width="13" height="11" viewBox="0 0 13 11" fill="none" stroke="#666"><path d="M.5 1h4.500l1.500 1 1.500-1h4.500v8.500H8l-1.500 1-1.500-1H.5zM6.500 2v8M2 4h3M2 6h3M8 4h3M8 6h3" /></svg></ViewButton>
          <ViewButton $on><svg width="14" height="11" viewBox="0 0 14 11" fill="none" stroke="#555"><path d="M.5.500h13v10H.5zM2 2.500h10M2 4.500h10M2 6.500h10M2 8.500h10" /></svg></ViewButton>
          <ViewButton><svg width="15" height="12" viewBox="0 0 15 12" fill="none" stroke="#666"><path d="M8 .5H.5v10H6M2 3h5M2 5h4M2 7h4" /><circle cx="10" cy="7.500" r="4" fill="#777" /><path d="M7 6l3 1 2-3" stroke="#eee" /></svg></ViewButton>
          <ZoomOut><svg width="10" height="2"><path d="M0 .5h8" stroke="#444" /></svg></ZoomOut>
          <Track><Thumb /></Track>
          <svg width="9" height="9"><path d="M0 4.500h9M4.500 0v9" stroke="#444" /></svg>
          <Label $ls={-0.35} $gap={14}>100%</Label>
        </Views>
      </StatusBar>

      <Taskbar>
        <TaskButton><svg width="16" height="16" viewBox="0 0 16 16" fill="#fff"><path d="M0 2.200L6.800 1.200V7.600H0zM7.600 1.100L16 0v7.600H7.600zM0 8.400h6.800v6.400L0 13.800zM7.600 8.400H16V16l-8.400-1.100z" /></svg></TaskButton>
        <SearchBox>
          <svg width="17" height="17" viewBox="0 0 17 17" fill="none" stroke="#222" strokeWidth="1.200"><circle cx="10.500" cy="6" r="5.300" /><path d="M6.700 9.800L.7 16" /></svg>
          <Label $size={14} $ls={-0.02}>Type here to search</Label>
        </SearchBox>
        <TaskButton><svg width="17" height="16" viewBox="0 0 17 16" fill="none" stroke="#fff"><path d="M.5 0v2.500h10V0M.5 4.500h10v7H.5zM.5 16v-2.500h10V16M14.500 0v4M14.500 9v7" /><path d="M13 5h3v3h-3z" fill="#fff" stroke="none" /></svg></TaskButton>
        <TaskButton $gap={3}><Edge /></TaskButton>
        <TaskButton $gap={1}><Folder /></TaskButton>
        <TaskButton $gap={1}><Firefox /></TaskButton>
        <TaskButton $w={40} $gap={5} $line><Outlook /></TaskButton>
        <TaskButton $gap={5} $on $line><WordLogo /></TaskButton>
        <Tray>
          <Cell><svg width="12" height="7"><path d="M.5 6L6 .8 11.500 6" fill="none" stroke="#fff" strokeWidth="1.200" /></svg></Cell>
          <Cell><svg width="12" height="16" viewBox="0 0 12 16" fill="none" stroke="#fff"><rect x="1.500" y="4.500" width="6.500" height="7" rx="1" /><path d="M8.500 7l2.500-1.500v5L8.500 9M2 2.500q3-3 7 0M2 13.500q3 3 7 0" /></svg></Cell>
          <Cell><svg width="16" height="14" viewBox="0 0 16 14" fill="none" stroke="#fff"><path d="M4.500 2.500h11v7h-11zM10 9.500v3M6 12.500h8M.5.500h4v4h-4zM2.500 4.500v7.500h4" /></svg></Cell>
          <Cell><svg width="17" height="14" viewBox="0 0 17 14" fill="none" stroke="#fff"><path d="M.5 4.500h2.500L6.500 1.500v11L3 9.500H.5zM8.500 5q1.500 2 0 4M11 3q3 4 0 8M13.500 1.500q4.500 5.500 0 11" /></svg></Cell>
          <Clock><Label $size={11.5} $ls={-0.2}>4:45 AM</Label><Label $size={11.5} $ls={-0.3}>3/25/2025</Label></Clock>
          <Cell $gap={8} $w={32}><svg width="25" height="24" viewBox="0 0 25 24"><path d="M1 3h15v12H8l-4 3.500V15H1z" fill="#fff" /><path d="M3.500 6h10M3.500 9h10M3.500 12h7" stroke="#000c1c" /><circle cx="16.500" cy="18.500" r="7.500" fill="#36404c" stroke="#808891" /><text x="13.500" y="23" fontSize="12" fill="#fff">1</text></svg></Cell>
          <ShowDesktop />
        </Tray>
      </Taskbar>

      <Toast>
        <ToastHead>
          <svg width="12" height="12" viewBox="0 0 12 12" fill="none" stroke="#fff"><path d="M.5 1.500h5v5h-5zM.5 6.500h5v5h-5zM5.500 6.500h5v-5h-5M5.500 11.500v-5" /></svg>
          <Label $size={11.5} $ls={0.1}>Suggested</Label>
          <svg width="10" height="10"><path d="M0 0l10 10M10 0L0 10" stroke="#aaa" /></svg>
        </ToastHead>
        <ToastBody>
          <XboxLogo />
          <ToastText><ToastTitle>Love PC Gaming?</ToastTitle><span>Play hundreds of high-quality PC</span><span>games with friends.</span></ToastText>
        </ToastBody>
        <ToastActions><ToastButton>Join Now</ToastButton><ToastButton>Dismiss</ToastButton></ToastActions>
      </Toast>
      <Watermark width="200" height="68" viewBox="0 0 200 68" fill="#fff" opacity=".5">
        <g fontFamily="Roboto, sans-serif" fontSize="51" fontWeight="500">
          <text x="3" y="51" textLength="63" lengthAdjust="spacingAndGlyphs">ANY</text>
          <text x="132" y="51" textLength="63" lengthAdjust="spacingAndGlyphs">RUN</text>
        </g>
        <g fill="none" stroke="#fff" strokeWidth="4" strokeLinejoin="round">
          <path d="M82 9.500Q76 8 76 14V58L86 63 127 38 86 5V48M91 16l23 16M87 55l29-18" />
        </g>
      </Watermark>
    </Screen>
  );
}
